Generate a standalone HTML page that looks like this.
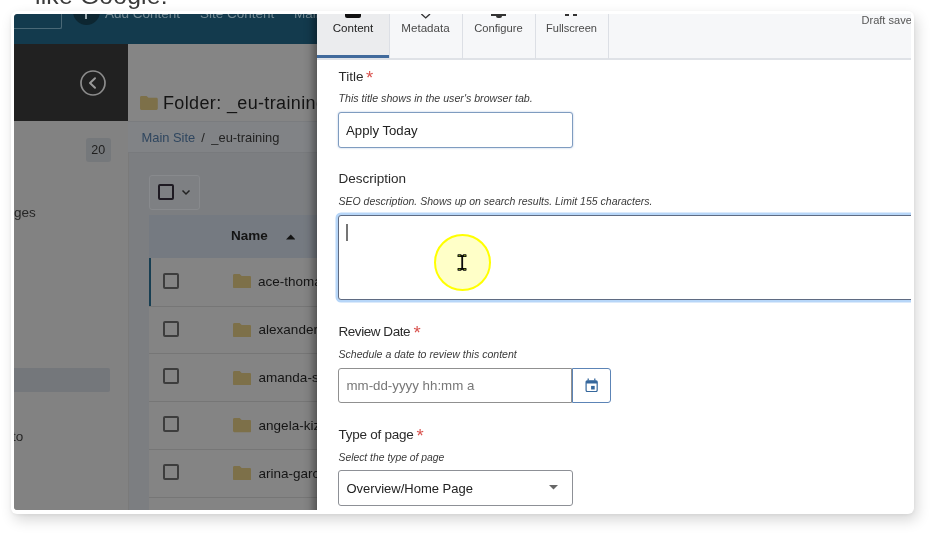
<!DOCTYPE html>
<html><head><meta charset="utf-8">
<style>
html,body{margin:0;padding:0;}
body{width:936px;height:536px;overflow:hidden;background:#fff;position:relative;font-family:"Liberation Sans",sans-serif;color:#222;}
.abs{position:absolute;}
.t{position:absolute;white-space:nowrap;line-height:1;}
#top{will-change:transform;left:34.5px;top:-15.6px;font-size:24.7px;color:#3a3a3a;letter-spacing:0.2px;}
#card{left:10.6px;top:10.5px;width:903.7px;height:503.8px;background:#fff;border-radius:6px;box-shadow:3px 6px 14px rgba(0,0,0,0.16),0 1px 4px rgba(0,0,0,0.06);}
#shot{left:14.3px;top:14px;width:896.7px;height:496.1px;overflow:hidden;border-radius:3.5px 0 0 3.5px;background:#858585;}
/* coordinates inside #shot are page coords minus (14.5,14) -> use wrapper with offset */
#in{will-change:transform;position:absolute;left:-14.3px;top:-14px;width:936px;height:536px;}
#nav{left:0;top:0;width:936px;height:44px;background:#133a4d;}
#side1{left:0;top:44px;width:128.2px;height:77px;background:#212121;}
#side2{left:0;top:121px;width:128.2px;height:420px;background:#828282;}
#sideline{left:127.6px;top:121px;width:1px;height:500px;background:#7a7a7a;}
#main{left:128px;top:44px;width:800px;height:500px;background:#7c7e81;}
#mainhead{left:128px;top:44px;width:800px;height:77px;background:#858585;}
.row{position:absolute;left:149.3px;width:400px;height:48px;border-top:1px solid #767676;box-sizing:border-box;background:#848484;}
.cb{position:absolute;left:13.8px;top:14px;width:12px;height:12px;border:2px solid #3d3d3d;border-radius:2px;}
.fold{position:absolute;left:83.3px;top:16.2px;}
.fn{position:absolute;left:109.3px;top:16.8px;font-size:13.5px;color:#151515;line-height:1;white-space:nowrap;}
#panel{left:317px;top:0;width:620px;height:536px;background:#fff;box-shadow:-3px 0 9px rgba(0,0,0,0.45);}
.lab{font-size:13.5px;color:#2a2a2a;}
.req{color:#d9534f;font-size:18.5px;line-height:0;position:relative;top:2.9px;margin-left:-1.2px;}
.help{font-size:10.8px;font-style:italic;color:#3a3a3a;}
.inp{position:absolute;box-sizing:border-box;border:1.3px solid #8a8a8a;border-radius:3px;background:#fff;}
.tab{position:absolute;top:14px;height:44.5px;width:73px;box-sizing:border-box;border-right:1px solid #dcdfe5;}
.tab span{position:absolute;left:0;width:100%;text-align:center;top:8.4px;font-size:11.6px;color:#4a4a4a;line-height:1;}
</style></head><body>
<div class="t" id="top">like Google.</div>
<div class="abs" id="card"></div>
<div class="abs" id="shot"><div id="in">
  <div class="abs" id="nav"></div>
  <div class="abs" style="left:0;top:0;width:62.3px;height:28.6px;border:1px solid #4a6876;border-radius:2px;box-sizing:border-box;border-left:none;border-top:none"></div>
  <div class="abs" style="left:73px;top:-2px;width:27px;height:27px;border-radius:50%;background:#0d2631;"></div>
  <div class="abs" style="left:84.5px;top:10px;width:2px;height:9px;background:#9aa9b0;"></div>
  <div class="abs" style="left:0;top:14px;width:330px;height:9px;overflow:hidden;">
    <div class="t" style="left:105px;top:-6.6px;font-size:13.5px;color:#748a94;">Add Content</div>
    <div class="t" style="left:200px;top:-6.6px;font-size:13.5px;color:#748a94;">Site Content</div>
    <div class="t" style="left:294px;top:-6.6px;font-size:13.5px;color:#748a94;">Main</div>
  </div>
  <div class="abs" id="main"></div><div class="abs" id="mainhead"></div>
  <div class="abs" id="side1"></div>
  <div class="abs" id="side2"></div>
  <div class="abs" id="sideline"></div>
  <!-- collapse icon -->
  <svg class="abs" style="left:79.4px;top:68.8px" width="28" height="28" viewBox="0 0 28 28"><circle cx="14" cy="14" r="12" fill="none" stroke="#8c8c8c" stroke-width="1.7"/><path d="M16 9.3 L11 14 L16 18.7" fill="none" stroke="#999" stroke-width="2" stroke-linecap="round" stroke-linejoin="round"/></svg>
  <!-- sidebar bits -->
  <div class="abs" style="left:85.5px;top:137.8px;width:25.3px;height:24px;border-radius:3px;background:#75787b;"></div>
  <div class="t" style="left:91.2px;top:144px;font-size:12.5px;color:#1f1f1f;">20</div>
  <div class="t" style="left:14px;top:206px;font-size:13.5px;color:#262626;">ges</div>
  <div class="abs" style="left:0;top:367.6px;width:110px;height:24.6px;border-radius:2px;background:#74777b;"></div>
  <div class="t" style="left:12px;top:430px;font-size:13.5px;color:#262626;">to</div>
  <!-- heading -->
  <svg class="abs" style="left:140.4px;top:95.8px" width="17.8" height="14" viewBox="0 0 19 15"><path d="M1.5 0 H7 L9 2 H17.5 Q19 2 19 3.5 V13.5 Q19 15 17.5 15 H1.5 Q0 15 0 13.5 V1.5 Q0 0 1.5 0Z" fill="#7d7049"/></svg>
  <div class="t" style="left:163px;top:93.8px;font-size:18px;letter-spacing:0.36px;color:#141414;">Folder: _eu-training</div>
  <!-- breadcrumb -->
  <div class="abs" style="left:128px;top:121px;width:500px;height:32px;background:#818386;border-top:1px solid #7a7c7f;border-bottom:1px solid #787a7d;box-sizing:border-box;"></div>
  <div class="t" style="left:141.5px;top:131.8px;font-size:12.9px;color:#2f465f;">Main Site</div><div class="t" style="left:201.3px;top:131.8px;font-size:12.9px;color:#222;">/</div><div class="t" style="left:211.3px;top:131.8px;font-size:12.9px;color:#222;">_eu-training</div>
  <!-- select button -->
  <div class="abs" style="left:149.3px;top:175px;width:50.6px;height:35.2px;border:1px solid #888a8d;border-radius:3px;box-sizing:border-box;background:#7e8083;"></div>
  <div class="abs" style="left:157.9px;top:184px;width:12.3px;height:12.3px;border:2px solid #1e1a22;border-radius:2px;"></div>
  <svg class="abs" style="left:180.6px;top:189px" width="10" height="7" viewBox="0 0 10 7"><path d="M1.5 1.5 L5 5 L8.5 1.5" fill="none" stroke="#222" stroke-width="1.5"/></svg>
  <!-- table header -->
  <div class="abs" style="left:149.3px;top:215px;width:400px;height:43.6px;background:#757a81;"></div>
  <div class="t" style="left:231px;top:229px;font-size:13.5px;font-weight:bold;color:#141414;">Name</div>
  <svg class="abs" style="left:285.6px;top:234.2px" width="9.6" height="5.6" viewBox="0 0 10 6" preserveAspectRatio="none"><path d="M0 6 L5 0.5 L10 6Z" fill="#141414"/></svg>
  <!-- rows -->
  <div class="row" style="top:258px;border-top:none;border-left:2px solid #173e52;"><div class="cb" style="left:11.8px;top:14.5px"></div><svg class="fold" style="left:81.3px" width="18.2" height="14.3" preserveAspectRatio="none" viewBox="0 0 19 15"><path d="M1.5 0 H7 L9 2 H17.5 Q19 2 19 3.5 V13.5 Q19 15 17.5 15 H1.5 Q0 15 0 13.5 V1.5 Q0 0 1.5 0Z" fill="#7d7049"/></svg><div class="fn" style="left:106.8px">ace-thomas</div></div>
  <div class="row" style="top:305.7px;"><div class="cb"></div><svg class="fold" width="18.2" height="14.3" preserveAspectRatio="none" viewBox="0 0 19 15"><path d="M1.5 0 H7 L9 2 H17.5 Q19 2 19 3.5 V13.5 Q19 15 17.5 15 H1.5 Q0 15 0 13.5 V1.5 Q0 0 1.5 0Z" fill="#7d7049"/></svg><div class="fn">alexander</div></div>
  <div class="row" style="top:353.4px;"><div class="cb"></div><svg class="fold" width="18.2" height="14.3" preserveAspectRatio="none" viewBox="0 0 19 15"><path d="M1.5 0 H7 L9 2 H17.5 Q19 2 19 3.5 V13.5 Q19 15 17.5 15 H1.5 Q0 15 0 13.5 V1.5 Q0 0 1.5 0Z" fill="#7d7049"/></svg><div class="fn">amanda-s</div></div>
  <div class="row" style="top:401.1px;"><div class="cb"></div><svg class="fold" width="18.2" height="14.3" preserveAspectRatio="none" viewBox="0 0 19 15"><path d="M1.5 0 H7 L9 2 H17.5 Q19 2 19 3.5 V13.5 Q19 15 17.5 15 H1.5 Q0 15 0 13.5 V1.5 Q0 0 1.5 0Z" fill="#7d7049"/></svg><div class="fn">angela-kiz</div></div>
  <div class="row" style="top:448.9px;"><div class="cb"></div><svg class="fold" width="18.2" height="14.3" preserveAspectRatio="none" viewBox="0 0 19 15"><path d="M1.5 0 H7 L9 2 H17.5 Q19 2 19 3.5 V13.5 Q19 15 17.5 15 H1.5 Q0 15 0 13.5 V1.5 Q0 0 1.5 0Z" fill="#7d7049"/></svg><div class="fn">arina-garc</div></div>
  <div class="row" style="top:496.6px;"></div>

  <!-- right panel -->
  <div class="abs" id="panel"></div>
  <div class="abs" style="left:317px;top:14px;width:620px;height:43.6px;background:#f6f7f9;border-bottom:2px solid #dfe2e7;"></div>
  <div class="abs" style="left:317px;top:14px;width:72px;height:41px;background:#ebecee;border-bottom:3px solid #416a9c;"></div>
  <div class="tab" style="left:317px;"><span style="color:#222">Content</span></div>
  <div class="tab" style="left:389.5px;"><span>Metadata</span></div>
  <div class="tab" style="left:462.5px;"><span style="font-size:11.2px;top:8.6px">Configure</span></div>
  <div class="tab" style="left:535.5px;"><span style="font-size:11.05px;top:8.6px">Fullscreen</span></div>
  <!-- icon remnants -->
  <div class="abs" style="left:344.5px;top:11px;width:16px;height:6.5px;border-radius:2px;background:#111;"></div>
  <svg class="abs" style="left:419.3px;top:12.4px" width="13.4" height="8" viewBox="0 0 14 8"><path d="M2.5 2 L7 6 L11.5 2" fill="none" stroke="#333" stroke-width="1.5"/></svg>
  <div class="abs" style="left:491px;top:14px;width:15px;height:2px;background:#333;"></div>
  <div class="abs" style="left:495.5px;top:15.4px;width:6px;height:3px;border-radius:0 0 2px 2px;background:#333;"></div>
  <div class="abs" style="left:564.5px;top:14px;width:4px;height:2.1px;background:#333;"></div>
  <div class="abs" style="left:573px;top:14px;width:4px;height:2.1px;background:#333;"></div>
  <div class="t" style="left:861.5px;top:14.7px;font-size:11.05px;color:#555;">Draft save</div>

  <!-- form -->
  <div class="t lab" style="left:338.5px;top:69.8px;">Title <span class="req">*</span></div>
  <div class="t help" style="left:338.5px;top:93px;font-size:10.65px">This title shows in the user's browser tab.</div>
  <div class="inp" style="left:338px;top:112px;width:235px;height:35.5px;border-color:#7f9cc0;box-shadow:0 0 2px rgba(90,130,190,0.5);"></div>
  <div class="t" style="left:346px;top:123.5px;font-size:13.2px;color:#222;">Apply Today</div>

  <div class="t lab" style="left:338.5px;top:172px;">Description</div>
  <div class="t help" style="left:338.5px;top:195.8px;font-size:10.5px">SEO description. Shows up on search results. Limit 155 characters.</div>
  <div class="inp" style="left:338.2px;top:215px;width:620px;height:84.8px;border-color:#5f6b82;box-shadow:0 0 0 2.5px #b7d6f8;"></div>
  <div class="abs" style="left:346px;top:223.8px;width:1.9px;height:17.2px;background:#757575;"></div>
  <div class="abs" style="left:433.8px;top:233.8px;width:57.6px;height:57.6px;box-sizing:border-box;border-radius:50%;background:#ffffc8;border:2px solid #ffff00;"></div>
  <svg class="abs" style="left:457.1px;top:254px" width="10" height="17" viewBox="0 0 10 17"><path d="M0.5 0.9 Q0.5 0.3 1.1 0.3 H3.9 L5.2 1.3 L6.4 0.3 H8.9 Q9.5 0.3 9.5 0.9 V2.4 Q9.5 3 8.9 3 H6.1 V13.9 H8.9 Q9.5 13.9 9.5 14.5 V16.1 Q9.5 16.7 8.9 16.7 H6.4 L5.2 15.7 L3.9 16.7 H1.1 Q0.5 16.7 0.5 16.1 V14.5 Q0.5 13.9 1.1 13.9 H4.3 V3 H1.1 Q0.5 3 0.5 2.4 Z" fill="#0a0a0a"/><rect x="1.5" y="1.1" width="1.9" height="1.1" fill="#7a9a12"/><rect x="6.9" y="1.1" width="1.7" height="1.1" fill="#7a9a12"/><rect x="1.5" y="14.8" width="1.9" height="1.1" fill="#7a9a12"/><rect x="6.9" y="14.8" width="1.7" height="1.1" fill="#7a9a12"/></svg>

  <div class="t lab" style="left:338.5px;top:325.3px;letter-spacing:-0.45px">Review Date <span class="req" style="margin-left:0">*</span></div>
  <div class="t help" style="left:338.5px;top:348.8px;font-size:10.55px">Schedule a date to review this content</div>
  <div class="inp" style="left:338px;top:367.5px;width:234px;height:35.3px;border-radius:3px 0 0 3px;border-color:#909090"></div>
  <div class="t" style="left:346.5px;top:379.2px;font-size:13.3px;color:#777;">mm-dd-yyyy hh:mm a</div>
  <div class="inp" style="left:571.5px;top:367.5px;width:39.5px;height:35.3px;border-radius:0 3px 3px 0;border-color:#5c84b6;"></div>
  <svg class="abs" style="left:585px;top:377.8px" width="13.2" height="14.4" viewBox="0 0 13.2 14.4"><path d="M3.2 0.4 V2.6 M9.8 0.4 V2.6" stroke="#3a6a9e" stroke-width="1.3"/><rect x="1.1" y="2.9" width="11.1" height="10.7" rx="1.3" fill="none" stroke="#35679c" stroke-width="1.2"/><rect x="1.1" y="2.9" width="11.1" height="2.6" fill="#35679c"/><rect x="6.1" y="7.9" width="3.6" height="3.6" fill="#35679c"/></svg>

  <div class="t lab" style="left:338.5px;top:427.5px;letter-spacing:-0.25px">Type of page <span class="req" style="top:3.6px;margin-left:-0.6px">*</span></div>
  <div class="t help" style="left:338.5px;top:452.6px;font-size:10.35px">Select the type of page</div>
  <div class="inp" style="left:338px;top:470.2px;width:234.5px;height:35.5px;border-color:#8d9096"></div>
  <div class="t" style="left:346.5px;top:481.5px;font-size:13px;color:#222;">Overview/Home Page</div>
  <svg class="abs" style="left:549.2px;top:485px" width="9" height="4.5" viewBox="0 0 10 5"><path d="M0 0 H10 L5 5Z" fill="#666"/></svg>
</div></div>
</body></html>
